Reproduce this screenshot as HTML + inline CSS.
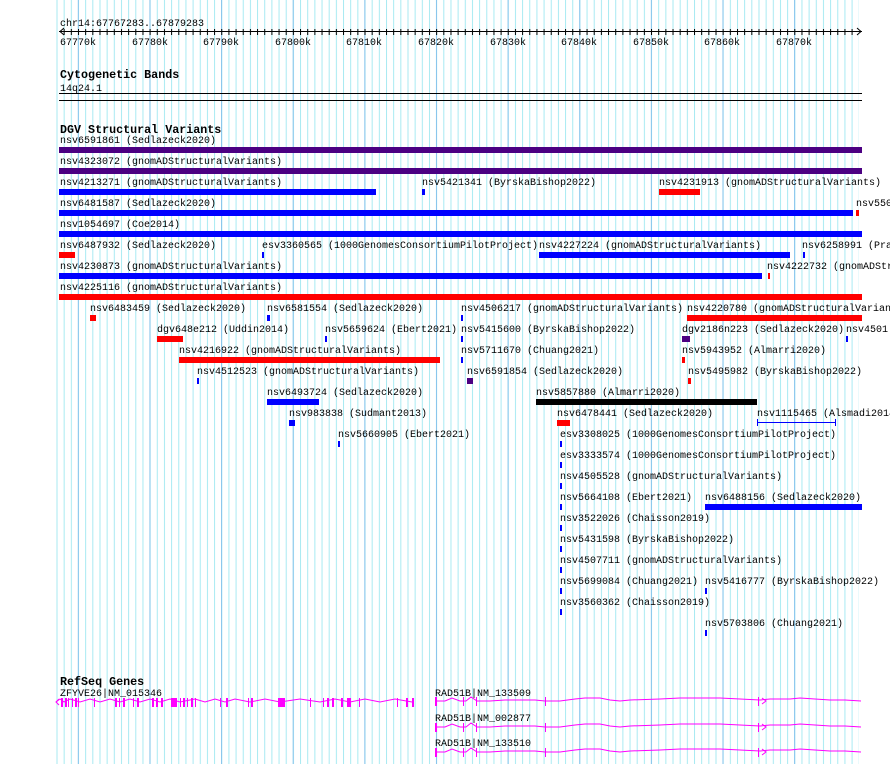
<!DOCTYPE html>
<html><head><meta charset="utf-8"><style>
html,body{margin:0;padding:0;background:#fff;width:890px;height:764px;overflow:hidden}
svg{display:block}
text{font-family:"Liberation Mono","DejaVu Sans Mono",monospace;font-size:10px;fill:#000;transform:translateY(1px)}
.b{font-weight:bold;font-size:11.7px}
</style></head><body>
<svg width="890" height="764" viewBox="0 0 890 764" xmlns="http://www.w3.org/2000/svg">
<defs>
<pattern id="mn" x="56.5" y="0" width="7.163" height="764" patternUnits="userSpaceOnUse"><rect x="0" y="0" width="1" height="764" fill="#a8eaf2"/></pattern>
<pattern id="mj" x="77.8" y="0" width="71.63" height="764" patternUnits="userSpaceOnUse"><rect x="0" y="0" width="1" height="764" fill="#88c4ec"/></pattern>
<pattern id="tk" x="56.5" y="0" width="7.163" height="40" patternUnits="userSpaceOnUse"><rect x="0" y="0" width="1" height="40" fill="#000"/></pattern>
</defs>
<rect x="56" y="0" width="803" height="764" fill="url(#mn)"/>
<rect x="77" y="0" width="782" height="764" fill="url(#mj)"/>
<text x="60" y="25">chr14:67767283..67879283</text>
<rect x="59" y="31" width="803" height="1" fill="#000"/>
<rect x="63" y="29" width="795" height="6" fill="url(#tk)"/>
<polyline points="64,28 60,31.5 64,35" fill="none" stroke="#000"/>
<polyline points="857,28 861,31.5 857,35" fill="none" stroke="#000"/>
<g text-anchor="middle">
<text x="78" y="44">67770k</text><text x="150" y="44">67780k</text><text x="221" y="44">67790k</text><text x="293" y="44">67800k</text><text x="364" y="44">67810k</text><text x="436" y="44">67820k</text><text x="508" y="44">67830k</text><text x="579" y="44">67840k</text><text x="651" y="44">67850k</text><text x="722" y="44">67860k</text><text x="794" y="44">67870k</text>
</g>
<text class="b" x="60" y="77">Cytogenetic Bands</text>
<text x="60" y="90">14q24.1</text>
<rect x="59" y="93" width="803" height="1" fill="#000"/>
<rect x="59" y="100" width="803" height="1" fill="#000"/>
<text class="b" x="60" y="132">DGV Structural Variants</text>
<text x="60" y="142">nsv6591861 (Sedlazeck2020)</text><rect x="59" y="147" width="803" height="6" fill="#4b0082"/>
<text x="60" y="163">nsv4323072 (gnomADStructuralVariants)</text><rect x="59" y="168" width="803" height="6" fill="#4b0082"/>
<text x="60" y="184">nsv4213271 (gnomADStructuralVariants)</text><rect x="59" y="189" width="317" height="6" fill="#00f"/>
<text x="422" y="184">nsv5421341 (ByrskaBishop2022)</text><rect x="422" y="189" width="3" height="6" fill="#00f"/>
<text x="659" y="184">nsv4231913 (gnomADStructuralVariants)</text><rect x="659" y="189" width="41" height="6" fill="#f00"/>
<text x="60" y="205">nsv6481587 (Sedlazeck2020)</text><rect x="59" y="210" width="794" height="6" fill="#00f"/>
<text x="856" y="205">nsv550</text><rect x="856" y="210" width="3" height="6" fill="#f00"/>
<text x="60" y="226">nsv1054697 (Coe2014)</text><rect x="59" y="231" width="803" height="6" fill="#00f"/>
<text x="60" y="247">nsv6487932 (Sedlazeck2020)</text><rect x="59" y="252" width="16" height="6" fill="#f00"/>
<text x="262" y="247">esv3360565 (1000GenomesConsortiumPilotProject)</text><rect x="262" y="252" width="2" height="6" fill="#00f"/>
<text x="539" y="247">nsv4227224 (gnomADStructuralVariants)</text><rect x="539" y="252" width="251" height="6" fill="#00f"/>
<text x="802" y="247">nsv6258991 (Pra</text><rect x="803" y="252" width="2" height="6" fill="#00f"/>
<text x="60" y="268">nsv4230873 (gnomADStructuralVariants)</text><rect x="59" y="273" width="703" height="6" fill="#00f"/>
<text x="767" y="268">nsv4222732 (gnomADStr</text><rect x="768" y="273" width="2" height="6" fill="#f00"/>
<text x="60" y="289">nsv4225116 (gnomADStructuralVariants)</text><rect x="59" y="294" width="803" height="6" fill="#f00"/>
<text x="90" y="310">nsv6483459 (Sedlazeck2020)</text><rect x="90" y="315" width="6" height="6" fill="#f00"/>
<text x="267" y="310">nsv6581554 (Sedlazeck2020)</text><rect x="267" y="315" width="3" height="6" fill="#00f"/>
<text x="461" y="310">nsv4506217 (gnomADStructuralVariants)</text><rect x="461" y="315" width="2" height="6" fill="#00f"/>
<text x="687" y="310">nsv4220780 (gnomADStructuralVarian</text><rect x="687" y="315" width="175" height="6" fill="#f00"/>
<text x="157" y="331">dgv648e212 (Uddin2014)</text><rect x="157" y="336" width="26" height="6" fill="#f00"/>
<text x="325" y="331">nsv5659624 (Ebert2021)</text><rect x="325" y="336" width="2" height="6" fill="#00f"/>
<text x="461" y="331">nsv5415600 (ByrskaBishop2022)</text><rect x="461" y="336" width="2" height="6" fill="#00f"/>
<text x="682" y="331">dgv2186n223 (Sedlazeck2020)</text><rect x="682" y="336" width="8" height="6" fill="#4b0082"/>
<text x="846" y="331">nsv4501</text><rect x="846" y="336" width="2" height="6" fill="#00f"/>
<text x="179" y="352">nsv4216922 (gnomADStructuralVariants)</text><rect x="179" y="357" width="261" height="6" fill="#f00"/>
<text x="461" y="352">nsv5711670 (Chuang2021)</text><rect x="461" y="357" width="2" height="6" fill="#00f"/>
<text x="682" y="352">nsv5943952 (Almarri2020)</text><rect x="682" y="357" width="3" height="6" fill="#f00"/>
<text x="197" y="373">nsv4512523 (gnomADStructuralVariants)</text><rect x="197" y="378" width="2" height="6" fill="#00f"/>
<text x="467" y="373">nsv6591854 (Sedlazeck2020)</text><rect x="467" y="378" width="6" height="6" fill="#4b0082"/>
<text x="688" y="373">nsv5495982 (ByrskaBishop2022)</text><rect x="688" y="378" width="3" height="6" fill="#f00"/>
<text x="267" y="394">nsv6493724 (Sedlazeck2020)</text><rect x="267" y="399" width="52" height="6" fill="#00f"/>
<text x="536" y="394">nsv5857880 (Almarri2020)</text><rect x="536" y="399" width="221" height="6" fill="#000"/>
<text x="289" y="415">nsv983838 (Sudmant2013)</text><rect x="289" y="420" width="6" height="6" fill="#00f"/>
<text x="557" y="415">nsv6478441 (Sedlazeck2020)</text><rect x="557" y="420" width="13" height="6" fill="#f00"/>
<text x="757" y="415">nsv1115465 (Alsmadi2014</text><rect x="757" y="422" width="79" height="1" fill="#00f"/><rect x="757" y="419" width="1" height="7" fill="#00f"/><rect x="835" y="419" width="1" height="7" fill="#00f"/>
<text x="338" y="436">nsv5660905 (Ebert2021)</text><rect x="338" y="441" width="2" height="6" fill="#00f"/>
<text x="560" y="436">esv3308025 (1000GenomesConsortiumPilotProject)</text><rect x="560" y="441" width="2" height="6" fill="#00f"/>
<text x="560" y="457">esv3333574 (1000GenomesConsortiumPilotProject)</text><rect x="560" y="462" width="2" height="6" fill="#00f"/>
<text x="560" y="478">nsv4505528 (gnomADStructuralVariants)</text><rect x="560" y="483" width="2" height="6" fill="#00f"/>
<text x="560" y="499">nsv5664108 (Ebert2021)</text><rect x="560" y="504" width="2" height="6" fill="#00f"/>
<text x="705" y="499">nsv6488156 (Sedlazeck2020)</text><rect x="705" y="504" width="157" height="6" fill="#00f"/>
<text x="560" y="520">nsv3522026 (Chaisson2019)</text><rect x="560" y="525" width="2" height="6" fill="#00f"/>
<text x="560" y="541">nsv5431598 (ByrskaBishop2022)</text><rect x="560" y="546" width="2" height="6" fill="#00f"/>
<text x="560" y="562">nsv4507711 (gnomADStructuralVariants)</text><rect x="560" y="567" width="2" height="6" fill="#00f"/>
<text x="560" y="583">nsv5699084 (Chuang2021)</text><rect x="560" y="588" width="2" height="6" fill="#00f"/>
<text x="705" y="583">nsv5416777 (ByrskaBishop2022)</text><rect x="705" y="588" width="2" height="6" fill="#00f"/>
<text x="560" y="604">nsv3560362 (Chaisson2019)</text><rect x="560" y="609" width="2" height="6" fill="#00f"/>
<text x="705" y="625">nsv5703806 (Chuang2021)</text><rect x="705" y="630" width="2" height="6" fill="#00f"/>
<text class="b" x="60" y="684">RefSeq Genes</text>
<text x="60" y="695">ZFYVE26|NM_015346</text>
<g stroke="#f0f" fill="none" stroke-width="1">
<polyline points="56,702 60,699 64,702 70,699 80,702 90,699 100,702 110,699 120,702 130,699 140,702 150,699 160,702 170,699 180,702 195,699 205,702 215,699 225,702 235,699 250,702 265,699 280,702 300,699 320,702 335,699 350,702 365,699 380,702 395,699 412,702"/>
<polyline points="59,699 56,702 59,705"/>
</g>
<g fill="#f0f">
<rect x="61" y="698" width="2" height="9"/><rect x="65" y="698" width="2" height="9"/><rect x="68" y="698" width="1" height="9"/><rect x="72" y="698" width="1" height="9"/><rect x="75" y="698" width="2" height="9"/><rect x="78" y="698" width="1" height="9"/><rect x="94" y="698" width="1" height="9"/><rect x="115" y="698" width="2" height="9"/><rect x="119" y="698" width="1" height="9"/><rect x="123" y="698" width="2" height="9"/><rect x="133" y="698" width="1" height="9"/><rect x="137" y="698" width="2" height="9"/><rect x="152" y="698" width="2" height="9"/><rect x="156" y="698" width="2" height="9"/><rect x="161" y="698" width="2" height="9"/><rect x="171" y="698" width="6" height="9"/><rect x="180" y="698" width="1" height="9"/><rect x="183" y="698" width="2" height="9"/><rect x="187" y="698" width="1" height="9"/><rect x="191" y="698" width="2" height="9"/><rect x="195" y="698" width="1" height="9"/><rect x="220" y="698" width="1" height="9"/><rect x="226" y="698" width="2" height="9"/><rect x="248" y="698" width="1" height="9"/><rect x="251" y="698" width="2" height="9"/><rect x="278" y="698" width="7" height="9"/><rect x="310" y="698" width="1" height="9"/><rect x="323" y="698" width="1" height="9"/><rect x="327" y="698" width="2" height="9"/><rect x="332" y="698" width="2" height="9"/><rect x="341" y="698" width="2" height="9"/><rect x="347" y="698" width="4" height="9"/><rect x="359" y="698" width="1" height="9"/><rect x="397" y="698" width="1" height="9"/><rect x="406" y="698" width="2" height="9"/><rect x="412" y="698" width="2" height="9"/>
</g>
<text x="435" y="695">RAD51B|NM_133509</text>
<text x="435" y="720">RAD51B|NM_002877</text>
<text x="435" y="745">RAD51B|NM_133510</text>
<g id="rad">
<polyline stroke="#f0f" fill="none" points="436,701 445,701 452,698 460,701 466,701 471,697 477,701 490,701 505,700 520,700 535,700 545,701 560,701 575,699 585,698 600,698 610,700 620,701 630,700 660,699 680,698 700,698 720,698 740,699 760,700 770,699 790,699 800,698 815,699 830,700 845,700 861,701"/>
<polyline stroke="#f0f" fill="none" points="762,698 766,701 762,704"/>
<g fill="#f0f"><rect x="435" y="697" width="2" height="9"/><rect x="463" y="697" width="1" height="9"/><rect x="476" y="697" width="1" height="9"/><rect x="545" y="697" width="1" height="9"/><rect x="758" y="697" width="1" height="9"/></g>
</g>
<use href="#rad" y="26"/>
<use href="#rad" y="51"/>
</svg>
</body></html>
